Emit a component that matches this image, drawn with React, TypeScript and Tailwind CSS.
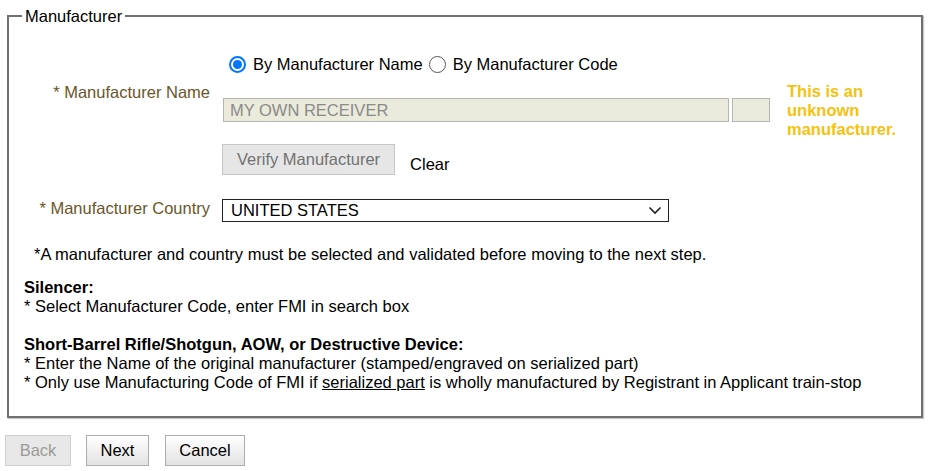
import React from "react"

const Radio: React.FC<{ checked?: boolean; label: string }> = ({ checked, label }) => {
    return (
        <label className="flex items-center">
            {checked ? (
                <span className="flex items-center justify-center w-[17px] h-[17px] rounded-full border-2 border-[#0075ff] bg-white">
                    <span className="w-[9px] h-[9px] rounded-full bg-[#0075ff]" />
                </span>
            ) : (
                <span className="w-[17px] h-[17px] rounded-full border border-[#555] bg-white" />
            )}
            <span className="ml-[7px]">{label}</span>
        </label>
    )
}

const App: React.FC = () => {
    return (
        <div className="w-[933px] h-[471px] bg-white text-black text-[16.5px] leading-[18.6px] font-['Liberation_Sans',Arial,sans-serif] overflow-hidden">
            <fieldset className="ml-[7px] mt-[7px] w-[916px] border-2 border-[#707070] shadow-[1px_1px_1px_#c8c8c8] pb-[25px]">
                <legend className="ml-[13px] px-[3px]">Manufacturer</legend>

                {/* name block */}
                <div className="flex mt-[29px]">
                    <div className="w-[201px] text-right pt-[28px] text-[#6b5629]">* Manufacturer Name</div>
                    <div className="ml-[12px] flex flex-col">
                        <div className="flex items-center h-[20px] pl-[7px] gap-[6px]">
                            <Radio checked label="By Manufacturer Name" />
                            <Radio label="By Manufacturer Code" />
                        </div>
                        <div className="flex items-center h-[57px] mt-[7px]">
                            <div className="ml-[1px] w-[506px] h-[24px] border border-[#b5b5b5] bg-[#ebebdc] text-[#8a8a8a] pl-[6px] flex items-center">
                                MY OWN RECEIVER
                            </div>
                            <div className="ml-[3px] w-[38px] h-[24px] border border-[#b5b5b5] bg-[#ebebdc]" />
                            <div className="ml-[17px] w-[115px] font-bold text-[#f5c20f] leading-[19px]">
                                This is an unknown manufacturer.
                            </div>
                        </div>
                        <div className="flex items-end mt-[5px]">
                            <button className="h-[31px] px-[14px] border border-[#c6c6c6] bg-[#e6e6e6] text-[#727272]">
                                Verify Manufacturer
                            </button>
                            <span className="ml-[15px] mb-[1px]">Clear</span>
                        </div>
                    </div>
                </div>

                {/* country */}
                <div className="flex items-start mt-[24px]">
                    <div className="w-[201px] text-right text-[#6b5629]">* Manufacturer Country</div>
                    <div className="ml-[12px] w-[447px] h-[23px] border border-[#222] flex items-center justify-between pl-[8px] pr-[6px]">
                        <span>UNITED STATES</span>
                        <svg width="14" height="14" viewBox="0 0 14 14" fill="none">
                            <path d="M1.5 4.5 L7 10 L12.5 4.5" stroke="#222" strokeWidth="1.6" />
                        </svg>
                    </div>
                </div>

                <p className="mt-[23px] ml-[25px]">
                    *A manufacturer and country must be selected and validated before moving to the next step.
                </p>

                <div className="ml-[15px] mt-[15px]">
                    <div className="font-bold">Silencer:</div>
                    <div>* Select Manufacturer Code, enter FMI in search box</div>
                    <div className="font-bold mt-[20px]">Short-Barrel Rifle/Shotgun, AOW, or Destructive Device:</div>
                    <div>* Enter the Name of the original manufacturer (stamped/engraved on serialized part)</div>
                    <div>
                        * Only use Manufacturing Code of FMI if <span className="underline">serialized part</span> is wholly
                        manufactured by Registrant in Applicant train-stop
                    </div>
                </div>
            </fieldset>

            <div className="flex mt-[17px] ml-[5px]">
                <button className="h-[31px] w-[66px] border border-[#cfcfcf] bg-[#e8e8e8] text-[#9a9a9a]">Back</button>
                <button className="ml-[15px] h-[31px] w-[63px] border border-[#adadad] bg-gradient-to-b from-white to-[#e2e2e2]">Next</button>
                <button className="ml-[16px] h-[31px] w-[80px] border border-[#adadad] bg-gradient-to-b from-white to-[#e2e2e2]">Cancel</button>
            </div>
        </div>
    )
}

export default App
